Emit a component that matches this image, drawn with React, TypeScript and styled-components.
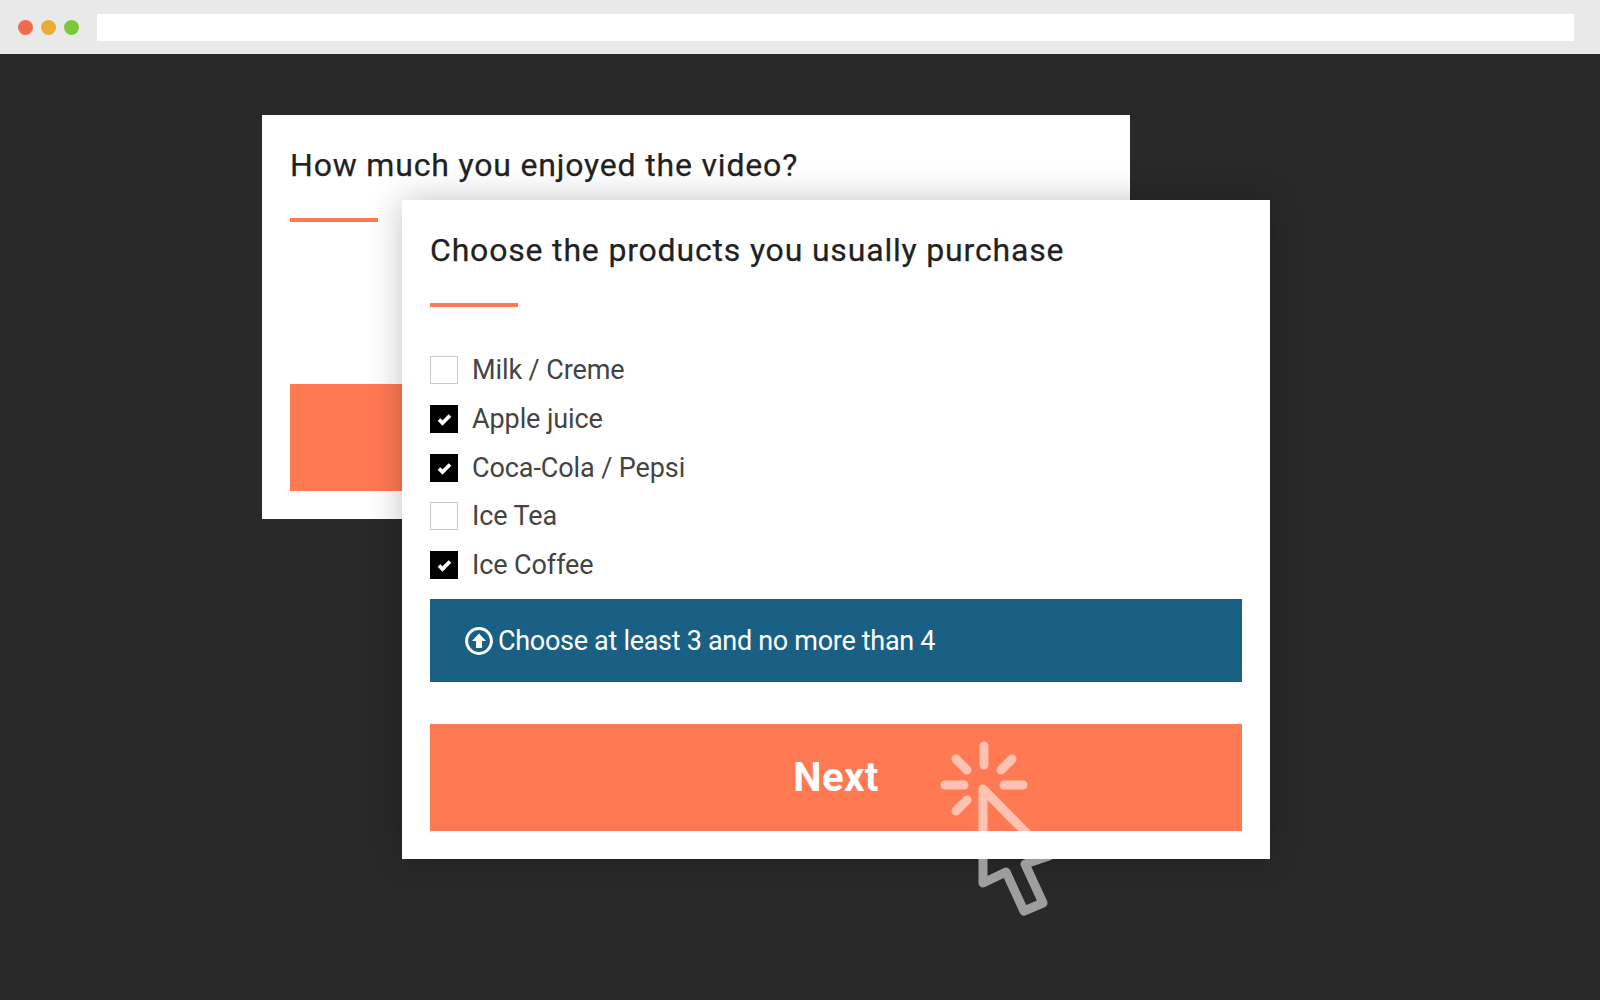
import styled, { createGlobalStyle } from "styled-components";

const GlobalStyle = createGlobalStyle`
  html, body {
    margin: 0;
    padding: 0;
    background: #292929;
  }
  * {
    box-sizing: border-box;
  }
`;

const Page = styled.div`
  width: 1600px;
  height: 1000px;
  overflow: hidden;
  display: flex;
  flex-direction: column;
  font-family: Roboto, "Liberation Sans", sans-serif;
`;

const BrowserBar = styled.div`
  height: 54px;
  flex: none;
  background: #e9e9e9;
  display: flex;
  align-items: center;
  padding: 0 26px 0 18px;
`;

const Dots = styled.div`
  display: flex;
  gap: 8px;
  margin-right: 18px;
`;

const Dot = styled.span<{ $color: string }>`
  width: 15px;
  height: 15px;
  border-radius: 50%;
  background: ${(p) => p.$color};
`;

const UrlBar = styled.div`
  flex: 1;
  height: 27px;
  background: #fff;
`;

const Stage = styled.div`
  position: relative;
  flex: 1;
  background: #292929;
  padding: 61px 0 0 262px;
`;

const Card = styled.div`
  width: 868px;
  background: #fff;
  padding: 28px;
`;

const BackCard = styled(Card)`
  height: 404px;
`;

const FrontCard = styled(Card)`
  position: absolute;
  left: 402px;
  top: 146px;
  height: 659px;
  box-shadow: 0 0 32px rgba(0, 0, 0, 0.24);
`;

const Title = styled.h2`
  margin: 0;
  height: 44px;
  font-size: 32px;
  line-height: 44px;
  font-weight: 400;
  letter-spacing: 0.82px;
  -webkit-text-stroke: 0.25px #222;
  color: #222;
  white-space: nowrap;
`;

const Rule = styled.div`
  width: 88px;
  height: 4px;
  margin-top: 31px;
  background: #ff7953;
`;

const GhostButton = styled.div`
  height: 107px;
  margin-top: 162px;
  background: #ff7953;
`;

const Options = styled.div`
  margin-top: 39px;
  display: flex;
  flex-direction: column;
`;

const Option = styled.div`
  height: 48.7px;
  display: flex;
  align-items: center;
  gap: 14px;
  font-size: 27px;
  letter-spacing: -0.1px;
  color: #444;
`;

const Box = styled.span<{ $checked: boolean }>`
  width: 28px;
  height: 28px;
  flex: none;
  display: flex;
  background: ${(p) => (p.$checked ? "#000" : "#fff")};
  border: ${(p) => (p.$checked ? "none" : "1px solid #c9c9c9")};
`;

const CheckMark = styled.svg`
  width: 28px;
  height: 28px;
`;

const Notice = styled.div`
  height: 83px;
  margin-top: 10px;
  background: #1a6085;
  color: #fff;
  display: flex;
  align-items: center;
  gap: 5px;
  padding-left: 35px;
  font-size: 27px;
  letter-spacing: -0.3px;
`;

const NoticeIcon = styled.svg`
  width: 28px;
  height: 28px;
  flex: none;
`;

const NextButton = styled.div`
  height: 107px;
  margin-top: 42px;
  background: #ff7953;
  color: #fff;
  display: flex;
  align-items: center;
  justify-content: center;
  font-size: 40px;
  font-weight: 700;
  letter-spacing: 0.4px;
`;

const Pointer = styled.svg`
  position: absolute;
  left: 930px;
  top: 681px;
  width: 130px;
  height: 190px;
  opacity: 0.55;
`;

const options = [
  { label: "Milk / Creme", checked: false },
  { label: "Apple juice", checked: true },
  { label: "Coca-Cola / Pepsi", checked: true },
  { label: "Ice Tea", checked: false },
  { label: "Ice Coffee", checked: true },
];

export default function App() {
  return (
    <Page>
      <GlobalStyle />
      <BrowserBar>
        <Dots>
          <Dot $color="#ee6c4d" />
          <Dot $color="#ecab35" />
          <Dot $color="#7cc83c" />
        </Dots>
        <UrlBar />
      </BrowserBar>
      <Stage>
        <BackCard>
          <Title>How much you enjoyed the video?</Title>
          <Rule />
          <GhostButton />
        </BackCard>
        <FrontCard>
          <Title>Choose the products you usually purchase</Title>
          <Rule />
          <Options>
            {options.map((o) => (
              <Option key={o.label}>
                <Box $checked={o.checked}>
                  {o.checked && (
                    <CheckMark viewBox="0 0 28 28">
                      <path d="M9 14.5L12.5 18L20 10.5" fill="none" stroke="#fff" strokeWidth="3.8" />
                    </CheckMark>
                  )}
                </Box>
                {o.label}
              </Option>
            ))}
          </Options>
          <Notice>
            <NoticeIcon viewBox="0 0 28 28">
              <circle cx="14" cy="14" r="12.4" fill="none" stroke="#fff" strokeWidth="3" />
              <path fill="#fff" d="M14 6.5L21 14H17V21H11V14H7Z" />
            </NoticeIcon>
            Choose at least 3 and no more than 4
          </Notice>
          <NextButton>Next</NextButton>
        </FrontCard>
        <Pointer viewBox="0 0 130 190" fill="none" stroke="#fff" strokeLinecap="round" strokeLinejoin="round">
          <g strokeWidth="9">
            <path d="M54 11V30" />
            <path d="M15 50H34" />
            <path d="M74 50H93" />
            <path d="M26 24L37 35" />
            <path d="M82 24L71 35" />
            <path d="M26 76L37 65" />
          </g>
          <path strokeWidth="9" d="M53 54V148L76 137L94 176L113 168L95 129L119 121Z" />
        </Pointer>
      </Stage>
    </Page>
  );
}
